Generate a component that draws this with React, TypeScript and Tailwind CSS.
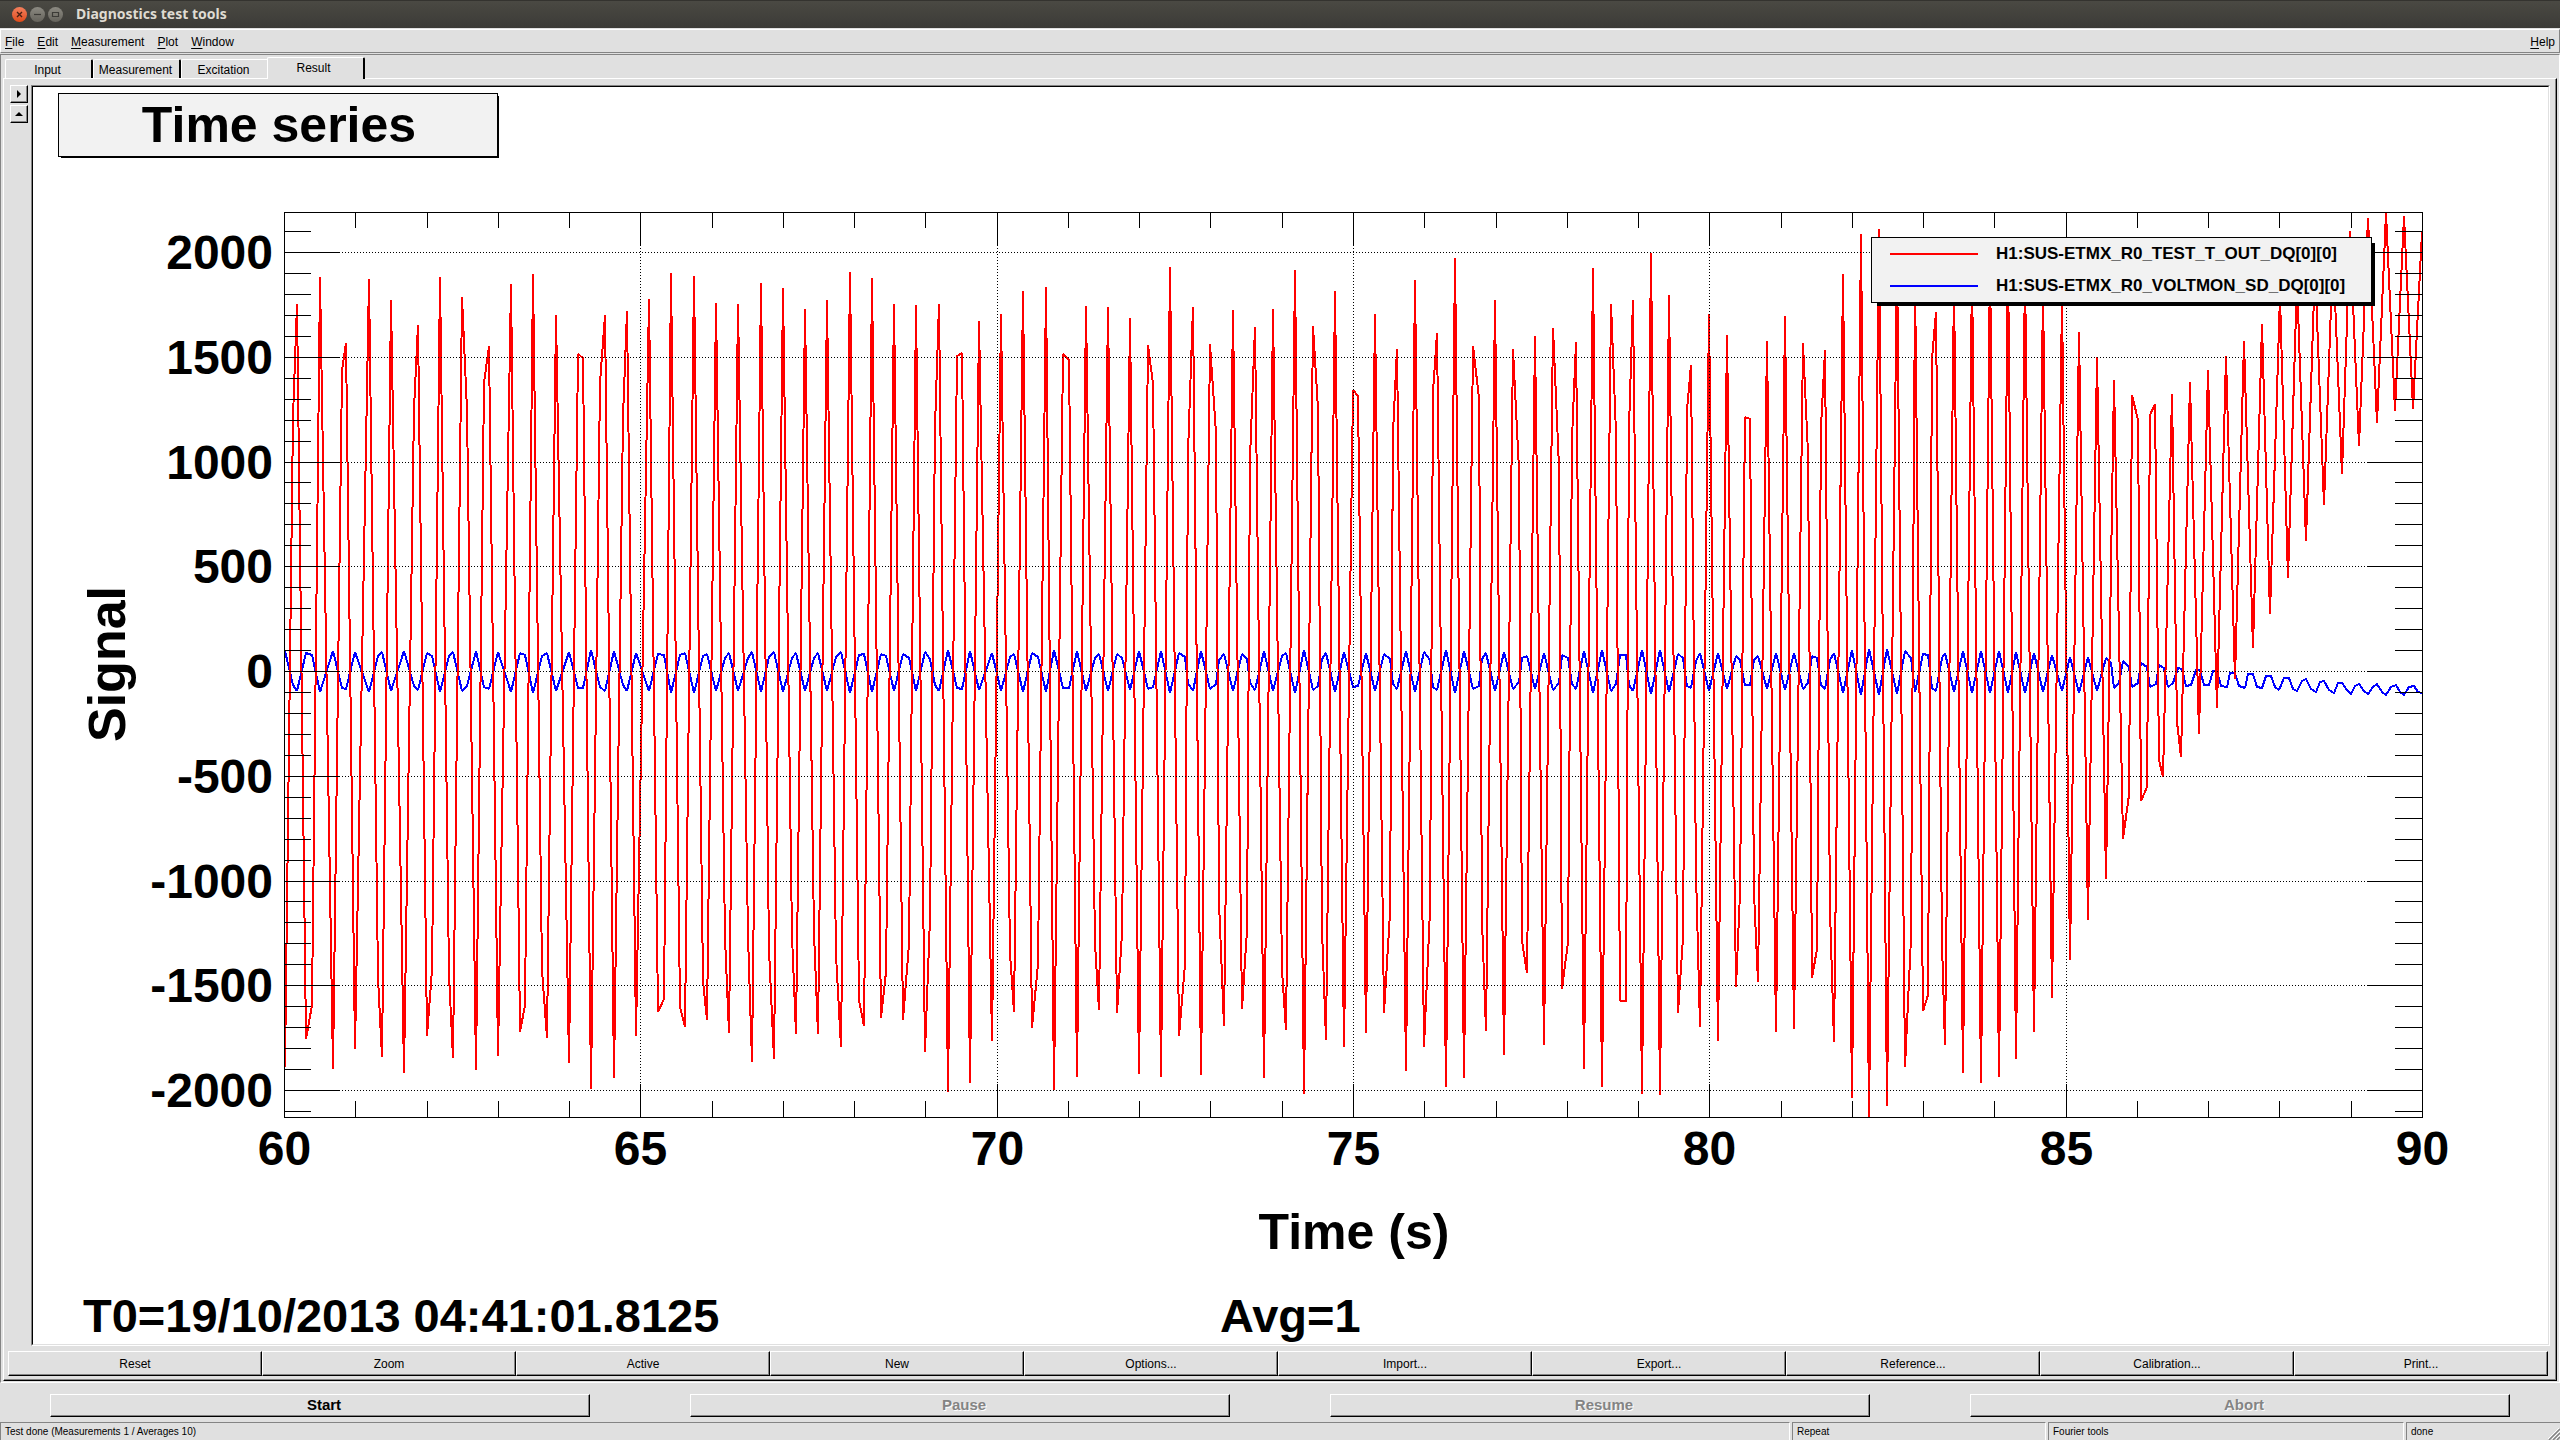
import React, { useState } from 'react';

type Point = [number, number];

const menus = ['File', 'Edit', 'Measurement', 'Plot', 'Window'];
const tabs = ['Input', 'Measurement', 'Excitation', 'Result'];
const plotActions = [
  'Reset', 'Zoom', 'Active', 'New', 'Options...',
  'Import...', 'Export...', 'Reference...', 'Calibration...', 'Print...',
];
const runActions = [
  { label: 'Start', enabled: true },
  { label: 'Pause', enabled: false },
  { label: 'Resume', enabled: false },
  { label: 'Abort', enabled: false },
];

// Plot frame in canvas units
const LEFT = 284;
const RIGHT = 2422;
const TOP = 212;
const BOTTOM = 1117;
const ZERO = 671;

const xAt = (t: number) => Math.round(LEFT + ((t - 60) * (RIGHT - LEFT)) / 30) + 0.5;
const yAt = (v: number) => Math.round(ZERO - v * 0.2095) + 0.5;

const crests: Point[] = [
  [293, 417], [297, 304], [320, 277], [342, 371], [346, 343], [369, 279], [391, 300], [414, 409], [418, 325],
  [440, 277], [462, 297], [467, 410], [484, 383], [489, 346], [511, 284], [533, 274], [556, 315], [578, 354],
  [583, 358], [600, 383], [605, 315], [623, 417], [627, 311], [649, 299], [671, 273], [694, 276], [716, 303],
  [738, 304], [761, 283], [783, 288], [805, 309], [827, 300], [850, 272], [872, 278], [894, 304], [916, 305],
  [935, 427], [939, 304], [957, 356], [962, 353], [979, 321], [1001, 314], [1023, 291], [1046, 287],
  [1063, 354], [1069, 360], [1086, 306], [1108, 307], [1130, 318], [1148, 345], [1153, 384], [1170, 267],
  [1188, 453], [1193, 307], [1210, 344], [1216, 433], [1233, 310], [1250, 459], [1255, 327], [1273, 309],
  [1295, 270], [1313, 326], [1318, 409], [1335, 291], [1353, 390], [1358, 396], [1375, 314], [1393, 433],
  [1397, 349], [1415, 280], [1433, 392], [1437, 333], [1455, 258], [1473, 346], [1479, 398], [1495, 300],
  [1513, 349], [1519, 470], [1535, 336], [1553, 328], [1559, 467], [1572, 439], [1576, 342], [1593, 268],
  [1611, 304], [1616, 433], [1629, 427], [1633, 300], [1651, 253], [1669, 295], [1687, 410], [1691, 365],
  [1709, 314], [1727, 335], [1745, 417], [1750, 419], [1767, 341], [1785, 316], [1803, 343], [1808, 453],
  [1821, 427], [1825, 350], [1843, 274], [1861, 234], [1879, 229], [1897, 255], [1915, 280], [1932, 359],
  [1936, 312], [1954, 285], [1972, 270], [1990, 262], [2008, 262], [2025, 270], [2043, 290], [2062, 300],
  [2079, 332], [2097, 357], [2114, 380], [2132, 395], [2138, 420], [2150, 415], [2155, 404], [2172, 394],
  [2190, 382], [2208, 370], [2226, 356], [2244, 341], [2262, 324], [2280, 296], [2297, 280], [2315, 265],
  [2333, 250], [2350, 231], [2368, 218], [2386, 213], [2404, 216], [2422, 232],
];

const troughs: Point[] = [
  [285, 1067], [306, 1039], [312, 1005], [333, 1069], [355, 1049], [378, 978], [382, 1057], [404, 1073],
  [427, 1036], [432, 970], [449, 975], [453, 1058], [476, 1070], [498, 1056], [520, 1032], [525, 1005],
  [542, 970], [547, 1038], [569, 1063], [591, 1089], [614, 1078], [636, 1036], [658, 1012], [664, 999],
  [680, 1007], [685, 1027], [703, 981], [707, 1020], [725, 938], [729, 1033], [748, 936], [752, 1062],
  [769, 950], [774, 1059], [792, 936], [796, 1034], [814, 933], [818, 1034], [836, 955], [841, 1047],
  [859, 1000], [864, 1026], [881, 1018], [886, 972], [903, 1020], [909, 944], [925, 1052], [930, 918],
  [948, 1092], [970, 1083], [992, 1041], [1010, 953], [1014, 1012], [1032, 1028], [1038, 964], [1054, 1090],
  [1077, 1077], [1095, 944], [1099, 1010], [1117, 1013], [1122, 933], [1139, 1074], [1161, 1077], [1179, 1036],
  [1185, 964], [1201, 1075], [1219, 902], [1224, 1026], [1242, 1009], [1247, 930], [1264, 1078], [1282, 970],
  [1286, 1030], [1304, 1094], [1322, 930], [1326, 1040], [1344, 1047], [1366, 1033], [1384, 1013], [1390, 913],
  [1406, 1071], [1424, 1047], [1430, 910], [1446, 1087], [1464, 1078], [1482, 921], [1486, 1031], [1504, 1055],
  [1522, 941], [1527, 973], [1544, 1045], [1562, 989], [1568, 942], [1584, 1069], [1602, 1087], [1620, 1001],
  [1626, 1001], [1642, 1094], [1660, 1095], [1678, 1013], [1683, 938], [1696, 873], [1700, 1027], [1718, 1041],
  [1736, 987], [1740, 893], [1754, 893], [1758, 982], [1776, 1032], [1794, 1029], [1812, 978], [1817, 949],
  [1830, 910], [1834, 1042], [1852, 1098], [1869, 1117], [1887, 1106], [1905, 1067], [1911, 938], [1923, 1011],
  [1928, 995], [1942, 944], [1945, 1045], [1963, 1073], [1981, 1083], [1999, 1077], [2016, 1059], [2034, 1032],
  [2052, 998], [2070, 960], [2088, 920], [2106, 879], [2123, 839], [2129, 795], [2141, 801], [2147, 787],
  [2159, 760], [2163, 777], [2177, 722], [2181, 757], [2199, 734], [2217, 708], [2235, 679], [2253, 648],
  [2270, 614], [2288, 578], [2306, 541], [2324, 505], [2342, 474], [2359, 446], [2377, 423], [2395, 411],
  [2413, 409],
];

// Tail of the monitor channel, where it drifts below zero
const tail: Point[] = [
  [2079, 693], [2088, 657], [2097, 691], [2106, 658], [2111, 663], [2114, 688], [2119, 683], [2123, 661],
  [2129, 667], [2132, 687], [2138, 683], [2141, 663], [2147, 667], [2150, 687], [2156, 684], [2159, 665],
  [2164, 668], [2168, 687], [2173, 683], [2178, 668], [2182, 669], [2186, 686], [2191, 685], [2196, 670],
  [2200, 670], [2204, 685], [2209, 685], [2213, 671], [2217, 671], [2221, 686], [2227, 687], [2230, 673],
  [2235, 673], [2239, 686], [2245, 688], [2248, 674], [2253, 674], [2257, 687], [2262, 688], [2266, 676],
  [2271, 676], [2275, 687], [2279, 690], [2284, 678], [2289, 678], [2293, 689], [2297, 691], [2302, 681],
  [2306, 679], [2311, 689], [2316, 692], [2320, 682], [2324, 681], [2329, 690], [2334, 693], [2338, 683],
  [2342, 683], [2347, 690], [2351, 694], [2355, 686], [2359, 684], [2364, 691], [2368, 694], [2373, 687],
  [2377, 684], [2382, 692], [2386, 695], [2391, 687], [2396, 685], [2400, 692], [2404, 695], [2409, 687],
  [2414, 686], [2418, 692], [2422, 693],
];

const drive = [...crests, ...troughs].sort((a, b) => a[0] - b[0]);
const monitor: Point[] = [
  ...drive
    .filter(([x]) => x < 2075)
    .map(([x, y]): Point => [x, Math.round(ZERO + 1 - (y - ZERO) * 0.052)]),
  ...tail,
];
const toPoints = (list: Point[]) => list.map((p) => p.join(',')).join(' ');

const Axes: React.FC = () => {
  const seconds = Array.from({ length: 29 }, (_, i) => 61 + i);
  const levels = Array.from({ length: 43 }, (_, i) => (i - 21) * 100);

  return (
    <g stroke="#000" strokeWidth={1} fill="none" shapeRendering="crispEdges">
      <rect x={LEFT + 0.5} y={TOP + 0.5} width={RIGHT - LEFT} height={BOTTOM - TOP} />
      {seconds.map((t) => {
        const major = t % 5 === 0;
        const len = major ? 33 : 16;
        return (
          <g key={t}>
            <path d={`M${xAt(t)} ${TOP}v${len}M${xAt(t)} ${BOTTOM}v${-len}`} />
            {major && <path d={`M${xAt(t)} ${TOP + len}V${BOTTOM - len}`} strokeDasharray="1 2" />}
          </g>
        );
      })}
      {levels.map((v) => {
        const major = v % 500 === 0;
        const len = major ? 55 : 27;
        return (
          <g key={v}>
            <path d={`M${LEFT} ${yAt(v)}h${len}M${RIGHT} ${yAt(v)}h${-len}`} />
            {major && <path d={`M${LEFT + len} ${yAt(v)}H${RIGHT - len}`} strokeDasharray="1 2" />}
          </g>
        );
      })}
    </g>
  );
};

const Legend: React.FC = () => (
  <g>
    <rect x={1877} y={243} width={498} height={63} fill="#000" />
    <rect x={1871.5} y={237.5} width={500} height={65} fill="#f2f2f2" stroke="#000" />
    <path d="M1890 254H1978" stroke="#f00" strokeWidth={2} />
    <path d="M1890 286H1978" stroke="#00f" strokeWidth={2} />
    <text x={1996} y={259} className="text-[17px]">H1:SUS-ETMX_R0_TEST_T_OUT_DQ[0][0]</text>
    <text x={1996} y={291} className="text-[17px]">H1:SUS-ETMX_R0_VOLTMON_SD_DQ[0][0]</text>
  </g>
);

const TimeSeries: React.FC = () => (
  <svg viewBox="33 87 2515 1257" className="block h-full w-full font-bold" fill="#000">
    <rect x={61} y={96} width={438} height={62} />
    <rect x={58.5} y={93.5} width={439} height={63} fill="#f2f2f2" stroke="#000" />
    <text x={279} y={142} textAnchor="middle" className="text-[50px]">Time series</text>

    <g fill="none" strokeWidth={2} strokeLinejoin="bevel" shapeRendering="crispEdges">
      <polyline points={toPoints(monitor)} stroke="#00f" />
      <polyline points={toPoints(drive)} stroke="#f00" />
    </g>
    <Axes />
    <Legend />

    <g className="text-[48px]">
      {[2000, 1500, 1000, 500, 0, -500, -1000, -1500, -2000].map((v) => (
        <text key={v} x={273} y={yAt(v) + 16.5} textAnchor="end">{v}</text>
      ))}
      {[60, 65, 70, 75, 80, 85, 90].map((t) => (
        <text key={t} x={xAt(t)} y={1165} textAnchor="middle">{t}</text>
      ))}
    </g>
    <text x={1354} y={1249} textAnchor="middle" className="text-[50px]">Time (s)</text>
    <text transform="translate(125 664) rotate(-90)" textAnchor="middle" className="text-[52px]">Signal</text>
    <text x={83} y={1332} className="text-[47px]">T0=19/10/2013 04:41:01.8125</text>
    <text x={1220} y={1332} className="text-[47px]">Avg=1</text>
  </svg>
);

const TitleBar: React.FC = () => (
  <header className="flex h-7 shrink-0 items-center border-t border-[#34332f] bg-linear-to-b from-[#4a4943] to-[#3c3b37] pl-3">
    <div className="flex gap-[3px]">
      <button aria-label="Close" className="flex size-[15px] items-center justify-center rounded-full bg-linear-to-b from-[#f37f5c] to-[#df4a16]">
        <svg viewBox="0 0 15 15" className="size-[15px]" stroke="#4a2013" strokeWidth={1.4}>
          <path d="M5 5l5 5M10 5l-5 5" />
        </svg>
      </button>
      <button aria-label="Minimize" className="size-[15px] rounded-full bg-linear-to-b from-[#8c8a82] to-[#65635c]">
        <svg viewBox="0 0 15 15" className="size-[15px]" stroke="#3c3b37" strokeWidth={1.2}>
          <path d="M4 7.5h7" />
        </svg>
      </button>
      <button aria-label="Maximize" className="size-[15px] rounded-full bg-linear-to-b from-[#8c8a82] to-[#65635c]">
        <svg viewBox="0 0 15 15" className="size-[15px]" fill="none" stroke="#3c3b37" strokeWidth={1.2}>
          <path d="M4.500 5.500h6v4h-6z" />
        </svg>
      </button>
    </div>
    <h1 className="ml-[13px] pb-[2px] font-['Noto_Sans','Open_Sans',sans-serif] text-sm font-bold text-[#dfdbd2]">
      Diagnostics test tools
    </h1>
  </header>
);

const MenuItem: React.FC<{ label: string }> = ({ label }) => (
  <button className="leading-5">
    <span className="underline underline-offset-2">{label[0]}</span>
    {label.slice(1)}
  </button>
);

const raised = 'border border-r-black border-b-black border-l-white border-t-white shadow-[inset_-1px_-1px_0_#848484]';
const statusCell = 'border border-t-[#848484] border-r-white border-b-0 border-l-[#848484] pl-1';

const App: React.FC = () => {
  const [activeTab, setActiveTab] = useState('Result');

  return (
    <div className="flex h-screen flex-col overflow-hidden bg-[#e0e0e0] font-['Liberation_Sans',Arial,sans-serif] text-xs text-black">
      <TitleBar />

      {/* Menu bar */}
      <div className="shrink-0 py-px">
        <nav className="flex h-6 items-center gap-[13px] border border-t-white border-r-[#848484] border-b-[#848484] border-l-white px-1 pt-[2px]">
          {menus.map((label) => <MenuItem key={label} label={label} />)}
          <div className="ml-auto"><MenuItem label="Help" /></div>
        </nav>
      </div>

      {/* Tabbed area */}
      <main className="flex min-h-0 flex-1 flex-col border border-t-[#848484] border-r-white border-b-white border-l-[#848484] px-[2px] pb-px">
        <div role="tablist" className="flex h-[23px] shrink-0 items-end pl-[2px]">
          {tabs.map((label) => {
            const active = label === activeTab;
            return (
              <button
                key={label}
                role="tab"
                aria-selected={active}
                onClick={() => setActiveTab(label)}
                className={`rounded-t-xs border-t border-r-2 border-l border-t-white border-r-black border-l-white ${
                  active ? 'relative z-10 -mb-px -ml-[2px] h-[22px] w-[98px] bg-[#e0e0e0] pr-1 pb-px' : 'h-[19px] w-[88px] pt-px pr-[2px]'
                }`}
              >
                {label}
              </button>
            );
          })}
        </div>

        <section className={`flex min-h-0 flex-1 flex-col px-1 pt-1.5 pb-1 ${raised}`}>
          <div className="flex min-h-0 flex-1 pr-[2px]">
            <div className="flex w-[23px] shrink-0 flex-col gap-[2px] pl-[2px]">
              <button aria-label="Show options" className={`flex size-[18px] items-center justify-center ${raised}`}>
                <svg viewBox="0 0 8 8" className="size-2"><path d="M2 0l4 4-4 4z" /></svg>
              </button>
              <button aria-label="Collapse" className={`flex size-[18px] items-center justify-center ${raised}`}>
                <svg viewBox="0 0 8 8" className="size-2"><path d="M0 6l4-4 4 4z" /></svg>
              </button>
            </div>
            <div className="min-w-0 flex-1 border border-t-[#848484] border-r-white border-b-white border-l-[#848484]">
              <div className="h-full border border-t-black border-r-[#e0e0e0] border-b-[#e0e0e0] border-l-black bg-white">
                <TimeSeries />
              </div>
            </div>
          </div>
          <div className="mt-[5px] grid shrink-0 grid-cols-10 pr-1">
            {plotActions.map((label) => (
              <button key={label} className={`h-[25px] ${raised}`}>{label}</button>
            ))}
          </div>
        </section>
      </main>

      {/* Run controls */}
      <div className="grid shrink-0 grid-cols-4 gap-x-[100px] px-[50px] pt-[11px] pb-[5px] text-[15px] font-bold">
        {runActions.map(({ label, enabled }) => (
          <button
            key={label}
            disabled={!enabled}
            className={`h-[23px] pb-[3px] pl-2 leading-5 ${raised} ${enabled ? '' : 'text-[#848484] [text-shadow:1px_1px_0_#fff]'}`}
          >
            {label}
          </button>
        ))}
      </div>

      {/* Status bar */}
      <footer className="flex h-[18px] shrink-0 gap-[2px] text-[10px] leading-[18px]">
        <div className={`flex-1 ${statusCell}`}>Test done (Measurements 1 / Averages 10)</div>
        <div className={`w-[254px] ${statusCell}`}>Repeat</div>
        <div className={`w-[356px] ${statusCell}`}>Fourier tools</div>
        <div className={`flex w-[154px] justify-between border-r-0 ${statusCell}`}>
          done
          <svg viewBox="0 0 12 12" className="size-3 self-end" strokeWidth={1.5}>
            <path d="M1 12L12 1M5 12L12 5M9 12L12 9" stroke="#848484" />
            <path d="M0 11L11 0M4 11L12 3M8 11L12 7" stroke="#fff" strokeWidth={1} />
          </svg>
        </div>
      </footer>
    </div>
  );
};

export default App;
